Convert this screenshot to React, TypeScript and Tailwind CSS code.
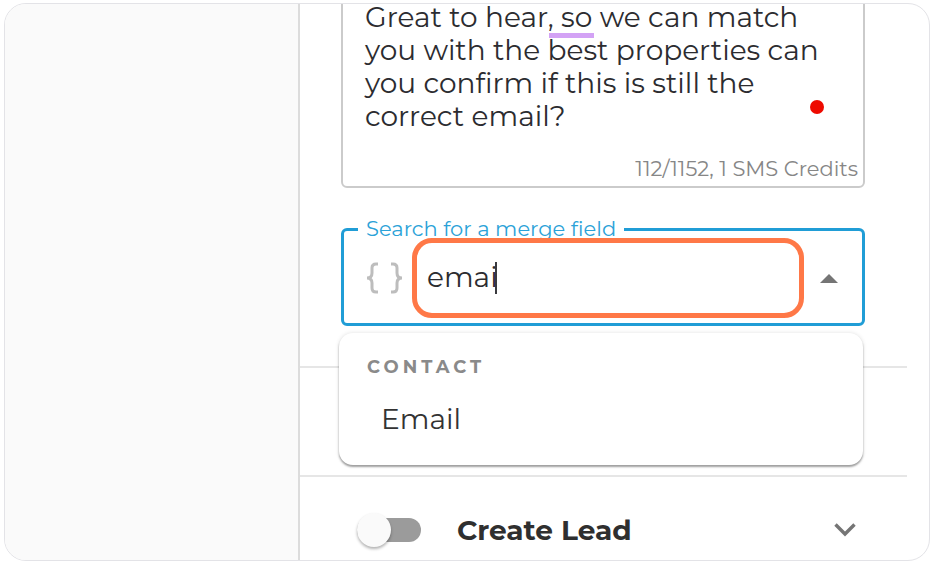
import React, { useState } from "react";

const MESSAGE =
  "Great to hear, so we can match you with the best properties can you confirm if this is still the correct email?";

const MessageBox = () => {
  const [message, setMessage] = useState(MESSAGE);

  return (
    <div className="relative -mt-4 flex flex-col rounded-md border-2 border-[#cbcbcb] pb-[5px]">
      <textarea
        aria-label="Message"
        rows={5}
        spellCheck={false}
        value={message}
        onChange={(e) => setMessage(e.target.value)}
        className="block h-[167px] w-full resize-none overflow-hidden bg-transparent pt-[11px] pr-8 pl-[22px] text-[28px] leading-[33px] text-[#2c2c30] outline-none"
      />
      <p className="pr-[5px] text-right text-[21px] leading-6 text-[#868686]">112/1152, 1 SMS Credits</p>

      {/* writing assistant marks */}
      <span className="absolute top-[43px] left-[206px] h-[5px] w-[45px] bg-[#d3a2f5]" />
      <span className="absolute top-[110px] right-[39px] size-[14px] rounded-full bg-[#ee0a00]" />
    </div>
  );
};

const MergeFieldSearch = () => {
  const [query, setQuery] = useState("emai");

  return (
    <div className="relative mt-[31px]">
      <fieldset className="min-w-0 rounded-md border-3 border-[#209dd6] pr-6 pb-[5px] pl-[22px]">
        <legend className="-ml-2 px-2 text-[21px] leading-5 text-[#2ba2d8]">
          <label htmlFor="merge-field">Search for a merge field</label>
        </legend>
        <div className="relative -mt-px flex items-center">
          <svg viewBox="0 0 36 32" className="mr-2.5 h-8 w-9 shrink-0" fill="none" stroke="#bdbdbd" strokeWidth="3">
            <path d="M12 2H10Q6 2 6 6V11Q6 16 1 16Q6 16 6 21V26Q6 30 10 30H12" />
            <path d="M25 2H27Q31 2 31 6V11Q31 16 36 16Q31 16 31 21V26Q31 30 27 30H25" />
          </svg>
          <input
            id="merge-field"
            type="text"
            autoComplete="off"
            value={query}
            onChange={(e) => setQuery(e.target.value)}
            className="h-20 min-w-0 flex-1 rounded-[20px] border-5 border-[#ff7847] bg-white px-2.5 pb-0.5 text-[28px] leading-8 text-[#2c2c30] caret-transparent outline-none"
          />
          <span className="absolute top-6 left-[129px] h-8 w-0.5 bg-[#3a3a3e]" />
          <button type="button" aria-label="Close options" className="ml-4 shrink-0">
            <svg viewBox="0 0 18 9" className="h-[9px] w-[18px]" fill="#757575">
              <path d="M0 9 9 0l9 9z" />
            </svg>
          </button>
        </div>
      </fieldset>

      <div className="absolute inset-x-0 top-full z-10 -ml-0.5 mt-[7px] mr-0.5 rounded-[14px] bg-white px-7 pt-6 pb-7 shadow-[0_2px_2px_rgba(0,0,0,0.35),0_0_4px_rgba(0,0,0,0.12)]">
        <h3 className="text-lg leading-5 font-bold tracking-[4px] text-[#8a8a8a]">CONTACT</h3>
        <button type="button" className="mt-6 block px-3.5 text-left text-[28px] leading-9 text-[#333333]">
          Email
        </button>
      </div>
    </div>
  );
};

const App = () => {
  const [createLead, setCreateLead] = useState(false);

  return (
    <div className="min-h-screen bg-white py-[3px] pr-[3px] pl-1 font-['Montserrat','Inter',sans-serif]">
      <main className="flex overflow-hidden rounded-[22px] border border-[#e3e3e7] bg-white">
        <aside className="w-[295px] shrink-0 border-r-2 border-[#dcdcdc] bg-[#fafafa]" />
        <div className="min-w-0 flex-1 pr-[22px]">
          <section className="pr-[42px] pb-10 pl-[41px]">
            <MessageBox />
            <MergeFieldSearch />
          </section>
          <div className="h-[109px] border-t-2 border-[#e6e6e6]" />
          <section className="flex items-center border-t-2 border-[#e6e6e6] pt-9 pr-[51px] pb-[13px] pl-[57px]">
            <input
              id="create-lead"
              type="checkbox"
              role="switch"
              checked={createLead}
              onChange={(e) => setCreateLead(e.target.checked)}
              className="relative my-[5px] mr-9 h-6 w-16 shrink-0 appearance-none rounded-full bg-[#9b9b9b] before:absolute before:top-1/2 before:left-0 before:size-[34px] before:-translate-y-1/2 before:rounded-full before:bg-[#fafafa] before:shadow-[0_2px_3px_rgba(0,0,0,0.3)] checked:before:right-0 checked:before:left-auto"
            />
            <label htmlFor="create-lead" className="flex-1 text-[28px] leading-[34px] font-bold text-[#2f2f2f]">
              Create Lead
            </label>
            <button type="button" aria-label="Expand Create Lead">
              <svg viewBox="0 0 22 14" className="h-[14px] w-[22px]" fill="none" stroke="#757575" strokeWidth="3.4">
                <path d="M1.5 1.5 11 11l9.500-9.500" />
              </svg>
            </button>
          </section>
        </div>
      </main>
    </div>
  );
};

export default App;
